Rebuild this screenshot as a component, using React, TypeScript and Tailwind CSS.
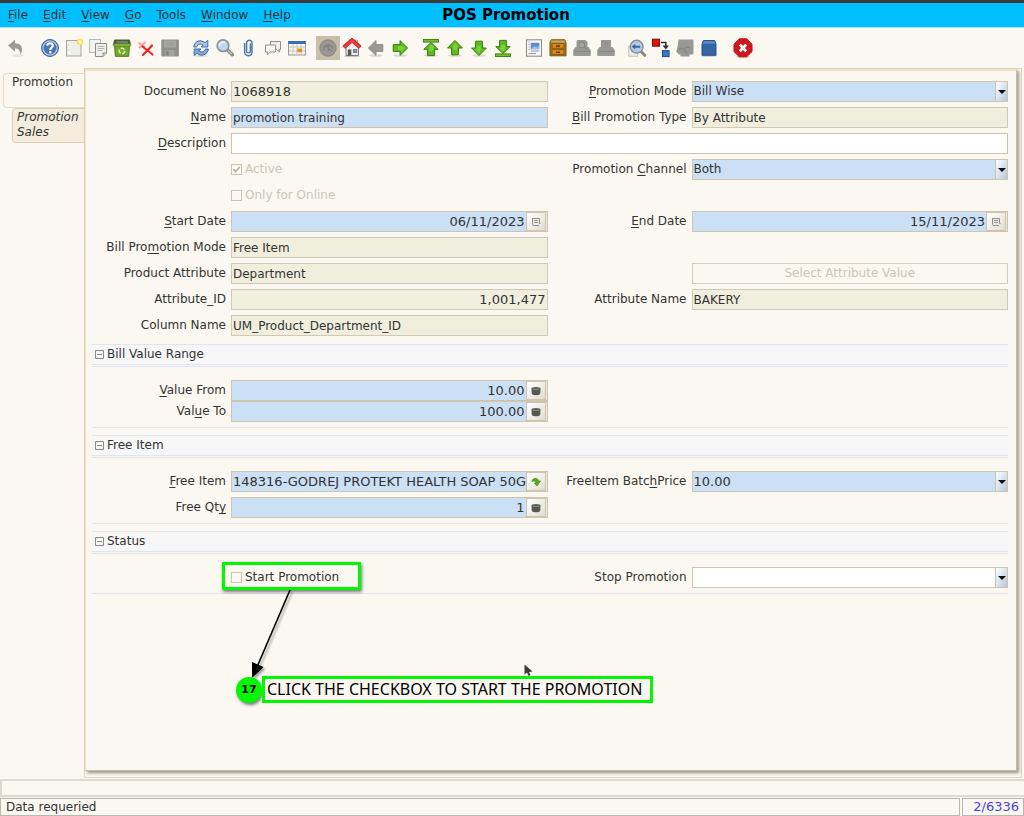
import React from "react";

type IconProps = { children: React.ReactNode };

function Icon({ children }: IconProps) {
  return (
    <svg viewBox="0 0 20 20" className="size-5" aria-hidden="true">
      {children}
    </svg>
  );
}

const greenFill = "#5dbb1c";
const greenEdge = "#3a7d0c";

function Arrow({ turn, bar, grey }: { turn: number; bar?: boolean; grey?: boolean }) {
  return (
    <Icon>
      <ellipse cx="10" cy="17.5" rx="7" ry="1.3" fill="#000" opacity="0.12" />
      <g transform={`rotate(${turn} 10 10)`}>
        <path
          d={bar ? "M10 4.6 L17.2 11.4 H13.4 V17.6 H6.6 V11.4 H2.8 Z" : "M10 2.4 L17.4 10 H13.4 V16.8 H6.6 V10 H2.6 Z"}
          fill={grey ? "#999997" : greenFill}
          stroke={grey ? "#8c8c8a" : greenEdge}
          strokeLinejoin="round"
        />
        {!grey && (
          <path d={bar ? "M10 6.2 L13.8 10 H12 V13 H8 V9 Z" : "M10 4.5 L14 9 H12 V12 H8 V8 Z"} fill="#86d84a" opacity="0.7" />
        )}
        {bar && <rect x="2.5" y="1.5" width="15" height="2.6" fill="#6fc22c" stroke={greenEdge} strokeWidth="0.9" />}
      </g>
    </Icon>
  );
}

const undo = (
  <Icon>
    <ellipse cx="12" cy="17.5" rx="6" ry="1.5" fill="#000" opacity="0.08" />
    <path d="M2 7.6 L9 1.8 V5.2 C15 5.2 18 9.5 14.6 17 C14.3 12.5 12.5 10.6 9 10.6 V13.8 Z" fill="#9b9b99" />
  </Icon>
);

const help = (
  <Icon>
    <circle cx="10" cy="10" r="8.4" fill="#4a76b4" stroke="#2d558f" />
    <circle cx="10" cy="10" r="7.1" fill="none" stroke="#b9cde8" strokeWidth="1.2" />
    <path d="M7.3 7.8 C7.3 4.3 13 4.3 12.8 7.8 C12.7 9.7 10.2 9.6 10.2 12" fill="none" stroke="#fff" strokeWidth="2.1" />
    <rect x="9.1" y="13.2" width="2.3" height="2.2" fill="#fff" />
  </Icon>
);

const newRecord = (
  <Icon>
    <rect x="2.5" y="2.5" width="14.5" height="15.5" fill="#eeeeec" stroke="#a4a5a0" />
    <path d="M5 5 V16" stroke="#fff" strokeWidth="1.5" />
    <path d="M4.3 7 h1 M4.3 12 h1" stroke="#888" />
    <circle cx="16" cy="4" r="3.2" fill="#f6e65a" />
    <circle cx="16" cy="4" r="1.4" fill="#fffbd0" />
  </Icon>
);

const copyRecord = (
  <Icon>
    <rect x="1.5" y="1.5" width="11" height="13" fill="#f3f3f0" stroke="#b9bab6" />
    <path d="M7.5 5.5 H18.5 V15 L15.2 18.5 H7.5 Z" fill="#f0f0ee" stroke="#8c8d89" />
    <path d="M9.5 8.5 h7 M9.5 10.5 h7 M9.5 12.5 h5" stroke="#b5b6b2" />
    <path d="M15 18.5 V15 H18.5" fill="#d4d5d1" stroke="#8c8d89" />
  </Icon>
);

const recycle = (
  <Icon>
    <path d="M2.5 2 H17.5 L18.5 6.5 H1.5 Z" fill="#4c4f4a" stroke="#416b12" />
    <path d="M4.5 3 H15.5 L16.5 5.5 H3.5 Z" fill="#777b74" />
    <path d="M2.5 7 H17.5 L16.6 18.3 H3.4 Z" fill="#73a82b" stroke="#4c7a12" />
    <rect x="1.3" y="5.8" width="17.4" height="2.4" rx="0.8" fill="#8fc14a" stroke="#4c7a12" strokeWidth="0.7" />
    <circle cx="10" cy="13" r="2.7" fill="none" stroke="#dff0c0" strokeWidth="1.6" strokeDasharray="4 1.6" />
  </Icon>
);

const deleteRecord = (
  <Icon>
    <path d="M2.5 4.5 L9 9.5 M9.5 4 L3 10" stroke="#f3a49c" strokeWidth="2" />
    <path d="M6.5 8.5 L16.5 16.5 M16 7.5 L7 17" stroke="#f0261c" strokeWidth="2.2" strokeLinecap="round" />
  </Icon>
);

const save = (
  <Icon>
    <rect x="1.3" y="1.5" width="17.6" height="17" rx="1" fill="#8f8f8d" />
    <rect x="4" y="2.5" width="12.2" height="7" fill="#a6a6a4" />
    <path d="M5.5 5 h9 M5.5 7 h9" stroke="#999997" />
    <rect x="5" y="12" width="9.5" height="6" fill="#a2a2a0" />
    <rect x="6" y="13" width="2.8" height="4.4" fill="#858583" />
  </Icon>
);

const refresh = (
  <Icon>
    <ellipse cx="10" cy="18" rx="7" ry="1.2" fill="#000" opacity="0.1" />
    <path d="M2.8 9 C3.2 2.8 10 1.2 14 4.6 L16.8 2.4 V9 H10.2 L12.2 7 C9.6 5.2 6.6 6.2 5.6 9 Z" fill="#a9c4e6" stroke="#3f6dad" strokeLinejoin="round" />
    <path d="M17.3 11 C16.8 17.2 10 18.8 6 15.4 L3.2 17.6 V11 H9.8 L7.8 13 C10.4 14.8 13.4 13.8 14.4 11 Z" fill="#7fa6d8" stroke="#3f6dad" strokeLinejoin="round" />
  </Icon>
);

const find = (
  <Icon>
    <path d="M12.5 12 L17.3 16.6" stroke="#858681" strokeWidth="3.6" strokeLinecap="round" />
    <path d="M13 12.5 L17 16.3" stroke="#c4c5c0" strokeWidth="1.4" />
    <circle cx="8" cy="7.7" r="5.8" fill="#bdd7f0" stroke="#8b9198" strokeWidth="1.7" />
    <path d="M4.3 8 C4.5 4.5 8 3.4 10 4.6" stroke="#eef6fd" strokeWidth="1.6" fill="none" />
  </Icon>
);

const attachment = (
  <Icon>
    <path
      d="M11.4 6 V13.5 C11.4 15.3 7.6 15.3 7.6 13.5 V5 C7.6 1.4 13 1.4 13 5 V14 C13 19 5.6 19 5.6 14 V5.5"
      fill="none"
      stroke="#4674b2"
      strokeWidth="1.4"
      strokeLinecap="round"
    />
  </Icon>
);

const chat = (
  <Icon>
    <path d="M7.5 3.5 H17.5 V11.5 H16 L16.8 14 L13.5 11.5 H7.5 Z" fill="#f1f1ef" stroke="#8f908c" strokeLinejoin="round" />
    <path d="M2.5 7 H12.5 V14 H7.2 L4.3 16.8 L4.8 14 H2.5 Z" fill="#fafaf9" stroke="#8f908c" strokeLinejoin="round" />
  </Icon>
);

const calendarGrid = (
  <Icon>
    <rect x="1.5" y="3.5" width="17" height="13.5" fill="#f5f5f3" stroke="#9a9b97" />
    <rect x="1.2" y="3" width="17.6" height="3" fill="#3c6eb4" />
    <path d="M2 9 H18 M2 13 H18 M6 6 V17 M10 6 V17 M14 6 V17" stroke="#bdbeba" strokeWidth="0.8" />
    <rect x="10.3" y="10.6" width="4.8" height="3.6" fill="#f18a1c" />
  </Icon>
);

const history = (
  <Icon>
    <circle cx="10" cy="10" r="8" fill="#9a9994" stroke="#8b8a85" strokeWidth="1.3" />
    <path d="M5.6 12.6 C5.4 6.4 13 4.7 15 10.5 M5 8.5 H10.5 V13" fill="none" stroke="#83827d" strokeWidth="1.5" />
    <path d="M10 10 L14.5 13.8" stroke="#83827d" strokeWidth="1.2" />
  </Icon>
);

const home = (
  <Icon>
    <ellipse cx="10" cy="18.3" rx="8" ry="1" fill="#000" opacity="0.2" />
    <path d="M4 9 L10 3.5 L16.5 9 V17.5 H4 Z" fill="#eeeeec" stroke="#7c7d79" />
    <rect x="13" y="2" width="2.5" height="5" fill="#ddd" stroke="#888" strokeWidth="0.6" />
    <path d="M1.8 9.3 L10 2.3 L18.2 9.3" fill="none" stroke="#b4151a" strokeWidth="4" />
    <path d="M2 9.2 L10 2.5 L18 9.2" fill="none" stroke="#ee3f41" strokeWidth="2.5" />
    <rect x="5.8" y="11.5" width="3.5" height="6" fill="#555753" />
    <rect x="11.3" y="11.5" width="3.6" height="3.2" fill="#6c96cb" stroke="#6b6c69" strokeWidth="0.6" />
  </Icon>
);

const report = (
  <Icon>
    <rect x="2.5" y="1.8" width="15" height="16.4" fill="#f6f6f4" stroke="#888a85" />
    <path d="M4.5 4 h1.2 M4.5 6.5 h1.2 M4.5 9 h1.2 M4.5 11.5 h1.2" stroke="#aaa" />
    <rect x="6.7" y="4.8" width="8.6" height="6.4" fill="#5c8ecb" />
    <path d="M6.7 11.2 L10.5 8 L12.4 9.6 L15.3 7.4 V11.2 Z" fill="#9fbfe3" />
    <path d="M6.7 13 h8.6 M4.5 15.5 h7.5" stroke="#999a96" />
  </Icon>
);

const archive = (
  <Icon>
    <path d="M3.3 1.8 H16.7 L18 4.5 V17.8 H2 V4.5 Z" fill="#a87a2a" stroke="#72500c" />
    <rect x="3" y="2.5" width="14" height="2" fill="#c9a96a" />
    <rect x="4" y="5.4" width="12" height="4.8" fill="#d98a14" stroke="#835308" strokeWidth="0.8" />
    <rect x="4" y="11.6" width="12" height="4.8" fill="#d98a14" stroke="#835308" strokeWidth="0.8" />
    <path d="M8 8 h4 M8 14.2 h4" stroke="#4d3a18" strokeWidth="1.5" />
  </Icon>
);

const printPreview = (
  <Icon>
    <path d="M5.5 2 H13.5 L15.5 4 V9 H16.5 L18.8 12 V17 Q18.8 18 17.8 18 H2.2 Q1.2 18 1.2 17 V12 L3.5 9 H4.5 V3 Z" fill="#989896" />
    <circle cx="9.8" cy="7" r="3" fill="#a3a3a1" stroke="#868684" />
    <path d="M12 9 L14.5 11.5" stroke="#868684" strokeWidth="1.4" />
    <path d="M2 13.5 H18" stroke="#848482" strokeWidth="0.9" />
  </Icon>
);

const print = (
  <Icon>
    <path d="M5 2 H15 V9 H16.5 L18.8 12 V17 Q18.8 18 17.8 18 H2.2 Q1.2 18 1.2 17 V12 L3.5 9 H5 Z" fill="#989896" />
    <path d="M8 6.5 L10 4.6 L12 6.5 M2 13.5 H18" stroke="#848482" fill="none" strokeWidth="0.9" />
  </Icon>
);

const zoomAcross = (
  <Icon>
    <rect x="1.8" y="8" width="9" height="10.2" fill="#ececea" stroke="#b5b6b2" strokeWidth="0.8" />
    <path d="M14 13.5 L17.8 17.3" stroke="#8d8778" strokeWidth="3" strokeLinecap="round" />
    <circle cx="9.7" cy="8.7" r="6.4" fill="#b2cce6" stroke="#8b9198" strokeWidth="1.5" />
    <path d="M4.8 8.7 L8.2 5.8 V7.7 H13.2 V9.7 H8.2 V11.6 Z" fill="#3b6395" />
  </Icon>
);

const workflow = (
  <Icon>
    <rect x="1.5" y="1.2" width="7" height="7" fill="#dd1111" stroke="#8f0606" />
    <rect x="11.5" y="12.6" width="6.6" height="6" fill="#3b78c4" stroke="#1f4f92" />
    <path d="M10 4.5 H14.8 V8" fill="none" stroke="#333" strokeWidth="1.6" />
    <path d="M11.5 7.6 H18 L14.8 11.6 Z" fill="#333" />
  </Icon>
);

const requests = (
  <Icon>
    <path d="M3.5 1.5 H17.5 Q18.5 1.5 18.5 3 V15 Q18.5 16.5 17 16.5 H14.5 V18.5 H5.5 V16.5 H4 L1.2 13.5 L2.5 9 Z" fill="#989896" />
    <path d="M3 12 Q6 8.5 8.5 11.5 Q12 7.5 15 10.5 M8.5 11.5 L12 15.5" stroke="#868684" strokeWidth="1.2" fill="none" />
  </Icon>
);

const product = (
  <Icon>
    <ellipse cx="10" cy="17.8" rx="8" ry="1" fill="#000" opacity="0.2" />
    <path d="M4.3 2.5 H15.7 L17 6 V17.3 H3 V6 Z" fill="#3465a4" stroke="#2a568f" strokeLinejoin="round" />
    <path d="M4.8 3.3 H15.2 L16.2 5.8 H3.8 Z" fill="#5d8cc8" />
  </Icon>
);

const exit = (
  <Icon>
    <ellipse cx="10" cy="18.8" rx="7" ry="1" fill="#000" opacity="0.2" />
    <path d="M6.4 0.8 H13.6 L19 6.2 V13.6 L13.6 18.8 H6.4 L1 13.6 V6.2 Z" fill="#d2161b" stroke="#b90f14" strokeLinejoin="round" />
    <path d="M6.8 6.6 L13.2 13.2 M13.2 6.6 L6.8 13.2" stroke="#fff" strokeWidth="2.8" />
  </Icon>
);

type Tool = { name: string; icon: React.ReactNode; pressed?: boolean };

const toolGroups: Tool[][] = [
  [{ name: "Undo", icon: undo }],
  [
    { name: "Help", icon: help },
    { name: "New", icon: newRecord },
    { name: "Copy", icon: copyRecord },
    { name: "Recycle", icon: recycle },
    { name: "Delete", icon: deleteRecord },
    { name: "Save", icon: save },
  ],
  [
    { name: "Refresh", icon: refresh },
    { name: "Find", icon: find },
    { name: "Attachment", icon: attachment },
    { name: "Chat", icon: chat },
    { name: "Grid toggle", icon: calendarGrid },
  ],
  [
    { name: "History", icon: history, pressed: true },
    { name: "Home", icon: home },
    { name: "Parent", icon: <Arrow turn={-90} grey /> },
    { name: "Detail", icon: <Arrow turn={90} /> },
  ],
  [
    { name: "First", icon: <Arrow turn={0} bar /> },
    { name: "Previous", icon: <Arrow turn={0} /> },
    { name: "Next", icon: <Arrow turn={180} /> },
    { name: "Last", icon: <Arrow turn={180} bar /> },
  ],
  [
    { name: "Report", icon: report },
    { name: "Archive", icon: archive },
    { name: "Print preview", icon: printPreview },
    { name: "Print", icon: print },
  ],
  [
    { name: "Zoom across", icon: zoomAcross },
    { name: "Workflow", icon: workflow },
    { name: "Requests", icon: requests },
    { name: "Product info", icon: product },
  ],
  [{ name: "Exit", icon: exit }],
];

/** Renders a caption whose mnemonic letter follows an ampersand. */
function Mnemonic({ text }: { text: string }) {
  const at = text.indexOf("&");
  if (at < 0) return <>{text}</>;
  return (
    <>
      {text.slice(0, at)}
      <u className="underline-offset-2">{text[at + 1]}</u>
      {text.slice(at + 2)}
    </>
  );
}

function FieldLabel({ id, text }: { id: string; text: string }) {
  return (
    <label htmlFor={id} className="self-center text-right whitespace-nowrap">
      <Mnemonic text={text} />
    </label>
  );
}

type FieldProps = { id: string; label: string; value: string };

function ReadOnlyField({ id, label, value, digits, numeric }: FieldProps & { digits?: boolean; numeric?: boolean }) {
  return (
    <>
      <FieldLabel id={id} text={label} />
      <input
        id={id}
        readOnly
        defaultValue={value}
        className={`h-[21px] w-full min-w-0 border border-[#cfc9b6] bg-[#f0efdd] px-px outline-none ${digits || numeric ? "text-[13px]" : ""} ${numeric ? "text-right" : ""}`}
      />
    </>
  );
}

function SelectField({ id, label, value, empty, digits }: FieldProps & { empty?: boolean; digits?: boolean }) {
  return (
    <>
      <FieldLabel id={id} text={label} />
      <div className="relative h-[21px] min-w-0 border border-[#cfc5ae]">
        <select
          id={id}
          defaultValue={value}
          className={`block h-full w-full appearance-none px-px outline-none ${empty ? "bg-white" : "bg-[#cce0f5]"} ${digits ? "text-[13px]" : ""}`}
        >
          <option value={value}>{value}</option>
        </select>
        <span className="pointer-events-none absolute inset-y-0 right-0 flex w-3 items-center justify-center border-l border-[#cfc5ae] bg-linear-to-br from-white to-[#b4c8dc]">
          <svg viewBox="0 0 8 4" className="h-1 w-2" aria-hidden="true">
            <path d="M0 0 H8 L4 4 Z" fill="#000" />
          </svg>
        </span>
      </div>
    </>
  );
}

const dateGlyph = (
  <svg viewBox="0 0 10 10" className="size-2.5" aria-hidden="true">
    <path d="M1.5 1.5 H8.5 M1.5 1 V7.5 Q1.5 8.5 3 8.5 H8 M8.5 1.5 V6.5 H9.5" fill="none" stroke="#8f8f8d" />
    <path d="M3 3.5 H7 M3 5.5 H7" stroke="#8f8f8d" />
  </svg>
);

const calculatorGlyph = (
  <svg viewBox="0 0 10 10" className="size-2.5" aria-hidden="true">
    <path d="M0.5 2.5 Q0.5 1 5 1 Q9.5 1 9.5 2.5 L9.2 8 Q8 9.2 5 9.2 Q2 9.2 0.8 8 Z" fill="#555753" />
    <path d="M1.5 3 Q5 4 8.5 3" stroke="#8f918c" fill="none" />
  </svg>
);

const lookupGlyph = (
  <svg viewBox="0 0 10 10" className="size-2.5" aria-hidden="true">
    <path d="M0.8 4.5 C1.5 0.5 7 0.3 7.6 4 H9.6 L6 9 L3.2 6 H5 C4.8 3.8 2.6 3.4 0.8 4.5 Z" fill="#5cab1c" stroke="#3f8310" strokeWidth="0.6" />
  </svg>
);

function LookupField({
  id,
  label,
  value,
  glyph,
  action,
  left,
}: FieldProps & { glyph: React.ReactNode; action: string; left?: boolean }) {
  return (
    <>
      <FieldLabel id={id} text={label} />
      <div className="flex h-[21px] min-w-0 border border-[#cfc5ae] bg-[#efe9da]">
        <input
          id={id}
          defaultValue={value}
          className={`min-w-0 flex-1 bg-[#cce0f5] text-[13px] outline-none ${left ? "pl-px" : "px-px text-right"}`}
        />
        <button
          type="button"
          aria-label={action}
          className="mr-px flex w-5 items-center justify-center border border-[#cfc5ae] bg-linear-to-br from-white to-[#e0dccf]"
        >
          {glyph}
        </button>
      </div>
    </>
  );
}

function TickBox({ id, label, checked, disabled }: { id: string; label: string; checked?: boolean; disabled?: boolean }) {
  return (
    <label htmlFor={id} className={`col-start-2 flex h-[21px] items-center gap-[3px] ${disabled ? "text-[#cdc5b6]" : ""}`}>
      <span className="relative flex size-[11px]">
        <input
          id={id}
          type="checkbox"
          defaultChecked={checked}
          disabled={disabled}
          className="peer size-[11px] appearance-none border border-[#cbc3b0]"
        />
        <svg viewBox="0 0 11 11" className="pointer-events-none absolute inset-0 hidden size-[11px] peer-checked:block" aria-hidden="true">
          <path d="M2.5 5 L4.6 7.6 L8.6 3" fill="none" stroke="#bdb5a2" strokeWidth="1.8" />
        </svg>
      </span>
      {label}
    </label>
  );
}

const fieldGrid = "grid grid-cols-[134px_minmax(0,1fr)_134px_minmax(0,1fr)] gap-x-[5px]";

function Section({ title, children }: { title: string; children: React.ReactNode }) {
  return (
    <section className="mt-[7px] border-b border-[#e0e4f5] pb-[5px]">
      <div className="border-b border-[#e0e4f5] pb-px">
        <h2 className="border-y border-[#e0e4f5] bg-[#f7f7f7]">
          <button type="button" className="flex h-[19px] items-center gap-[3px] pl-[3px]">
            <svg viewBox="0 0 9 9" className="size-[9px]" aria-hidden="true">
              <path d="M0.5 0.5 H8.5 V8.5 H0.5 Z M2 4.5 H7" fill="none" stroke="#8a8a88" />
            </svg>
            {title}
          </button>
        </h2>
      </div>
      <div className="pt-[13px]">{children}</div>
    </section>
  );
}

const menus = ["&File", "&Edit", "&View", "&Go", "&Tools", "&Window", "&Help"];

export default function App() {
  return (
    <div className="flex min-h-screen flex-col bg-[#fbf8f1] font-['DejaVu_Sans',sans-serif] text-[12px] leading-[15px] text-[#333]">
      <header className="grid h-7 grid-cols-[1fr_auto_1fr] items-center border-t-[3px] border-b border-t-[#3c3b37] border-b-[#b7dce6] bg-[#00bfff] pr-3">
        <nav className="flex gap-[15px] pl-2">
          {menus.map((m) => (
            <button key={m} type="button">
              <Mnemonic text={m} />
            </button>
          ))}
        </nav>
        <h1 className="text-[15px] font-bold text-black">POS Promotion</h1>
      </header>

      <div role="toolbar" aria-label="Window tools" className="flex h-10 items-center gap-[7px] pl-1">
        {toolGroups.map((group) => (
          <div key={group[0].name} className="flex first:mr-[3px] last:ml-[3px]">
            {group.map((tool) => (
              <button
                key={tool.name}
                type="button"
                aria-label={tool.name}
                className={`flex size-6 items-center justify-center ${tool.pressed ? "bg-[#c8bfaa]" : ""}`}
              >
                {tool.icon}
              </button>
            ))}
          </div>
        ))}
      </div>

      <div className="flex flex-1 pr-0.5">
        <div role="tablist" aria-label="Tabs" className="flex w-[84px] flex-col items-end pt-[5px]">
          <button
            type="button"
            role="tab"
            aria-selected="true"
            className="flex h-[35px] w-[81px] rounded-l-sm border border-r-0 border-[#e9dcc3] pt-px pl-2 text-left"
          >
            Promotion
          </button>
          <button
            type="button"
            role="tab"
            aria-selected="false"
            className="flex h-[35px] w-[72px] rounded-l-sm border border-r-0 border-[#dccfb4] bg-[#f4eddd] pt-px pl-1 text-left italic"
          >
            Promotion
            <br />
            Sales
          </button>
        </div>

        <div className="flex min-w-0 flex-1 border border-[#e2d5bb] pr-1 pb-1.5">
          <main className="relative flex-1 border border-t-2 border-[#f0e4ce] border-r-[#c9bda3] border-b-[#c9bda3] px-1.5 pt-[10px] pr-2 shadow-[2px_2px_3px_rgba(90,85,70,0.6)]">
            <div className={`${fieldGrid} gap-y-[5px] pb-px`}>
              <ReadOnlyField id="document-no" label="Document No" value="1068918" digits />
              <SelectField id="promotion-mode" label="&Promotion Mode" value="Bill Wise" />

              <FieldLabel id="name" text="&Name" />
              <input
                id="name"
                defaultValue="promotion training"
                className="h-[21px] w-full min-w-0 border border-[#cfc5ae] bg-[#cce0f5] px-px outline-none"
              />
              <ReadOnlyField id="bill-promotion-type" label="&Bill Promotion Type" value="By Attribute" />

              <FieldLabel id="description" text="&Description" />
              <input
                id="description"
                className="col-span-3 h-[21px] w-full border border-[#cfc5ae] bg-white px-px outline-none"
              />

              <TickBox id="active" label="Active" checked disabled />
              <SelectField id="promotion-channel" label="Promotion &Channel" value="Both" />

              <TickBox id="only-online" label="Only for Online" disabled />

              <div className="col-span-full grid grid-cols-subgrid">
                <LookupField id="start-date" label="&Start Date" value="06/11/2023" glyph={dateGlyph} action="Pick start date" />
                <LookupField id="end-date" label="&End Date" value="15/11/2023" glyph={dateGlyph} action="Pick end date" />
              </div>

              <div className="col-span-full grid grid-cols-subgrid">
                <ReadOnlyField id="bill-promotion-mode" label="Bill Pro&motion Mode" value="Free Item" />
              </div>

              <ReadOnlyField id="product-attribute" label="Product Attribute" value="Department" />
              <button type="button" disabled className="col-start-4 h-[21px] border border-[#d5ccba] text-[#cdc5b6]">
                Select Attribute Value
              </button>

              <ReadOnlyField id="attribute-id" label="Attribute_ID" value="1,001,477" numeric />
              <ReadOnlyField id="attribute-name" label="Attribute Name" value="BAKERY" />

              <ReadOnlyField id="column-name" label="Column Name" value="UM_Product_Department_ID" />
            </div>

            <Section title="Bill Value Range">
              <div className={fieldGrid}>
                <LookupField id="value-from" label="&Value From" value="10.00" glyph={calculatorGlyph} action="Calculator" />
                <div className="col-span-full grid grid-cols-subgrid">
                  <LookupField id="value-to" label="Val&ue To" value="100.00" glyph={calculatorGlyph} action="Calculator" />
                </div>
              </div>
            </Section>

            <Section title="Free Item">
              <div className={`${fieldGrid} gap-y-[5px]`}>
                <LookupField
                  id="free-item"
                  label="&Free Item"
                  value="148316-GODREJ PROTEKT HEALTH SOAP 50GM"
                  glyph={lookupGlyph}
                  action="Look up item"
                  left
                />
                <SelectField id="batch-price" label="FreeItem Batc&hPrice" value="10.00" digits />
                <LookupField id="free-qty" label="Free Qt&y" value="1" glyph={calculatorGlyph} action="Calculator" />
              </div>
            </Section>

            <Section title="Status">
              <div className={fieldGrid}>
                <TickBox id="start-promotion" label="Start Promotion" />
                <SelectField id="stop-promotion" label="Stop Promotion" value="" empty />
              </div>
            </Section>

            <div className="pointer-events-none absolute top-[491px] left-[136px] h-7 w-[139px] border-[3px] border-[#00f800] shadow-[1px_2px_3px_rgba(0,0,0,0.5)]" />
            <svg viewBox="0 0 60 100" className="pointer-events-none absolute top-[514px] left-[155px] h-[100px] w-[60px] drop-shadow-[2px_2px_1px_rgba(0,0,0,0.35)]" aria-hidden="true">
              <path d="M49 5 L16 82" stroke="#000" strokeWidth="1.6" />
              <path d="M11 93 L11 77 L22.500 82 Z" fill="#000" />
            </svg>
            <div className="absolute top-[605px] left-[150px] flex items-center">
              <span className="flex size-[26px] items-center justify-center rounded-full bg-[#00f800] text-[11px] font-bold text-black shadow-[1px_2px_3px_rgba(0,0,0,0.5)]">
                17
              </span>
              <p className="flex h-[27px] w-[391px] items-center border-[3px] border-[#00f800] pl-0.5 font-['Noto_Sans',sans-serif] text-[16px] whitespace-nowrap text-black">
                CLICK THE CHECKBOX TO START THE PROMOTION
              </p>
            </div>
            <svg viewBox="0 0 9 13" className="pointer-events-none absolute top-[593px] left-[438px] h-[13px] w-[9px]" aria-hidden="true">
              <path d="M0.500 0.500 V10.500 L3 8.500 L4.500 12 L6.500 11 L5 8 L8.500 7.500 Z" fill="#3a3a38" />
            </svg>
          </main>
        </div>
      </div>

      <footer className="flex flex-col gap-px pt-px">
        <div className="h-[18px] border-2 border-r-0 border-[#dfdacd]" />
        <div className="flex gap-0.5">
          <p className="h-[18px] flex-1 border border-[#b9b7b2] pt-px pl-[5px]">Data requeried</p>
          <p className="h-[18px] w-[62px] border border-[#b9b7b2] pr-1 text-right text-[13px] text-[#4b3fe8]">2/6336</p>
        </div>
      </footer>
    </div>
  );
}
